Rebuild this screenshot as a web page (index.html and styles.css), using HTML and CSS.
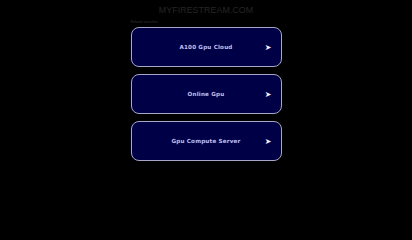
FILE: index.html
```html
<!DOCTYPE html>
<html>
<head>
<meta charset="utf-8">
<link rel="stylesheet" href="styles.css">
</head>
<body>
<div class="page">
  <div class="title">MYFIRESTREAM.COM</div>
  <div class="list">
    <div class="label">Related searches</div>
    <a class="item" href="#"><span class="txt">A100 Gpu Cloud</span><span class="arrow">➤</span></a>
    <a class="item" href="#"><span class="txt">Online Gpu</span><span class="arrow">➤</span></a>
    <a class="item" href="#"><span class="txt">Gpu Compute Server</span><span class="arrow">➤</span></a>
  </div>
</div>
</body>
</html>
```
FILE: styles.css
```css
html, body { margin: 0; padding: 0; background: #000; }
body { width: 412px; height: 227px; overflow: hidden; font-family: "Liberation Sans", Arial, sans-serif; }
.page { display: flex; flex-direction: column; align-items: center; }
.title {
  margin-top: 4px;
  height: 13px;
  line-height: 13px;
  font-size: 8.8px;
  letter-spacing: 0.1px;
  color: #262626;
}
.list { width: 151px; display: flex; flex-direction: column; gap: 7px; margin-top: 1px; }
.label { font-size: 3.5px; color: #333; height: 9px; line-height: 9px; margin-bottom: -7px; }
.item {
  box-sizing: border-box;
  height: 40px;
  border: 1.5px solid #a6a6c8;
  border-radius: 8px;
  background: #000046;
  display: flex;
  align-items: center;
  justify-content: center;
  position: relative;
  text-decoration: none;
}
.txt { font-family: "DejaVu Sans", Verdana, sans-serif; font-size: 5.6px; font-weight: bold; color: #c0c0f4; letter-spacing: 0.2px; }
.arrow { position: absolute; right: 9px; top: 50%; transform: translateY(-50%); font-size: 8px; color: #f0f0ff; font-family: "DejaVu Sans", sans-serif; }
```
